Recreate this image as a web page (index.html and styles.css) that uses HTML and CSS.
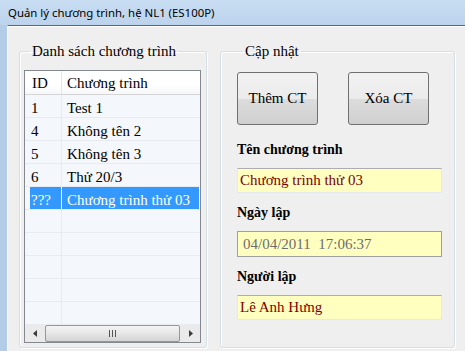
FILE: index.html
```html
<!DOCTYPE html>
<html>

<head>
    <meta charset="UTF-8">
    <title>Quản lý chương trình</title>
    <link rel="stylesheet" href="styles.css">
</head>

<body>

    <div class="window">
        <div class="titlebar">Quản lý chương trình, hệ NL1 (ES100P)</div>
        <div class="frame">
            <div class="client">

                <!-- Danh sách bên trái -->
                <fieldset class="group group-list">
                    <legend>Danh sách chương trình</legend>
                    <div class="listview">
                        <div class="lv-head">
                            <div class="col-id">ID</div>
                            <div class="col-name">Chương trình</div>
                        </div>
                        <div class="lv-body">
                            <div class="lv-row">
                                <div class="cell-id"><span>1</span></div>
                                <div class="cell-name"><span>Test 1</span></div>
                            </div>
                            <div class="lv-row">
                                <div class="cell-id"><span>4</span></div>
                                <div class="cell-name"><span>Không tên 2</span></div>
                            </div>
                            <div class="lv-row">
                                <div class="cell-id"><span>5</span></div>
                                <div class="cell-name"><span>Không tên 3</span></div>
                            </div>
                            <div class="lv-row">
                                <div class="cell-id"><span>6</span></div>
                                <div class="cell-name"><span>Thử 20/3</span></div>
                            </div>
                            <div class="lv-row selected">
                                <div class="cell-id"><span>???</span></div>
                                <div class="cell-name"><span>Chương trình thử 03</span></div>
                            </div>
                            <div class="lv-row"><div class="cell-id"></div><div class="cell-name"></div></div>
                            <div class="lv-row"><div class="cell-id"></div><div class="cell-name"></div></div>
                            <div class="lv-row"><div class="cell-id"></div><div class="cell-name"></div></div>
                            <div class="lv-row"><div class="cell-id"></div><div class="cell-name"></div></div>
                            <div class="lv-row"><div class="cell-id"></div><div class="cell-name"></div></div>
                        </div>
                        <div class="hscroll">
                            <div class="sb-arrow">
                                <svg width="4" height="7" viewBox="0 0 4 7"><path d="M4 0 L0 3.5 L4 7 Z" fill="#3c3c3c"/></svg>
                            </div>
                            <div class="sb-thumb">
                                <svg width="7" height="7" viewBox="0 0 7 7">
                                    <path d="M0.5 0 V7 M3.5 0 V7 M6.5 0 V7" stroke="#555" stroke-width="1"/>
                                </svg>
                            </div>
                            <div class="sb-arrow">
                                <svg width="4" height="7" viewBox="0 0 4 7"><path d="M0 0 L4 3.5 L0 7 Z" fill="#3c3c3c"/></svg>
                            </div>
                        </div>
                    </div>
                </fieldset>

                <!-- Cập nhật bên phải -->
                <fieldset class="group group-edit">
                    <legend>Cập nhật</legend>
                    <div class="buttons">
                        <button class="btn">Thêm CT</button>
                        <button class="btn">Xóa CT</button>
                    </div>
                    <div class="field">
                        <div class="field-label">Tên chương trình</div>
                        <input class="textbox" type="text" value="Chương trình thử 03">
                    </div>
                    <div class="field">
                        <div class="field-label">Ngày lập</div>
                        <input class="textbox disabled" type="text" value="04/04/2011  17:06:37" readonly>
                    </div>
                    <div class="field">
                        <div class="field-label">Người lập</div>
                        <input class="textbox" type="text" value="Lê Anh Hưng">
                    </div>
                </fieldset>

            </div>
        </div>
    </div>

</body>

</html>
```

FILE: styles.css
```css
/* Cửa sổ kiểu Windows 7 Basic */
body {
    margin: 0;
    padding: 0;
    font-family: "Liberation Serif", "Times New Roman", serif;
    font-size: 15px;
    color: #000;
}

.window {
    width: 465px;
    height: 351px;
    display: flex;
    flex-direction: column;
    background-color: #bcd3ec;
    overflow: hidden;
}

.titlebar {
    height: 25px;
    line-height: 25px;
    padding-left: 8px;
    font-family: "Noto Sans", "Open Sans", sans-serif;
    font-size: 11.4px;
    background: linear-gradient(#c8ddf2, #bcd3ec);
}

.frame {
    flex: 1;
    display: flex;
    border-left: 7px solid #b3cce8;
}

.client {
    flex: 1;
    display: flex;
    gap: 13px;
    padding: 16px 9px 5px 11px;
    background-color: #efefef;
    border-top: 1px solid #56687f;
    border-left: 1px solid #f8f8f8;
    box-shadow: inset 0 1px 0 #ffffff;
}

/* Group box */
.group {
    margin: 0;
    padding: 0;
    min-width: 0;
    border: 1px solid #d5dfe5;
    border-radius: 3px;
    box-shadow: inset 1px 1px 0 #ffffff, 1px 1px 0 #ffffff;
    display: flex;
    flex-direction: column;
}

.group legend {
    margin-left: 6px;
    padding: 0 2px;
    line-height: 18px;
    font-size: 15px;
}

.group-list {
    width: 188px;
    box-sizing: border-box;
    padding: 10px 5px 4px 4px;
}

.group-edit {
    width: 235px;
    box-sizing: border-box;
    padding: 12px 12px 0 16px;
}

/* ListView */
.listview {
    flex: 1;
    display: flex;
    flex-direction: column;
    border: 1px solid #828790;
    background-color: #f4f7fb;
    overflow: hidden;
}

.lv-head {
    display: flex;
    height: 23px;
    border-bottom: 1px solid #d5d5d5;
    background: linear-gradient(#ffffff, #ffffff 60%, #f5f7f9);
    line-height: 18px;
}

.lv-head .col-id {
    width: 37px;
    box-sizing: border-box;
    padding: 3px 0 0 7px;
    border-right: 1px solid #e3e8ee;
}

.lv-head .col-name {
    flex: 1;
    padding: 3px 0 0 5px;
}

.lv-body {
    flex: 1;
    overflow: hidden;
}

.lv-row {
    display: flex;
    height: 22px;
    border-bottom: 1px solid #e8ecf1;
}

.cell-id {
    width: 37px;
    box-sizing: border-box;
    padding-left: 5px;
    border-right: 1px solid #e8ecf1;
    display: flex;
}

.cell-name {
    flex: 1;
    padding-right: 1px;
    display: flex;
}

.lv-row span {
    flex: 1;
    line-height: 18px;
    padding-top: 4px;
    white-space: nowrap;
}

.cell-id span {
    padding-left: 1px;
}

.cell-name span {
    padding-left: 5px;
}

.lv-row.selected span {
    background-color: #3399ff;
    color: #ffffff;
}

.lv-row.selected .cell-id {
    border-right-color: #ffffff;
}

/* Thanh cuộn ngang */
.hscroll {
    height: 17px;
    display: flex;
    background-color: #eaeaea;
}

.sb-arrow {
    width: 19px;
    display: flex;
    justify-content: center;
    align-items: center;
}

.sb-thumb {
    flex: 1;
    margin: 0 1px;
    border: 1px solid #979797;
    border-radius: 2px;
    background: linear-gradient(#f4f4f4, #e6e6e6 50%, #d4d4d4);
    display: flex;
    justify-content: center;
    align-items: center;
}

/* Nút bấm */
.buttons {
    display: flex;
    gap: 30px;
    margin-bottom: 16px;
}

.btn {
    width: 81px;
    height: 53px;
    padding: 0;
    border: 1px solid #707070;
    border-radius: 3px;
    background: linear-gradient(#f2f2f2, #ebebeb 50%, #dddddd 50%, #cfcfcf);
    font-family: "Liberation Serif", "Times New Roman", serif;
    font-size: 15px;
    color: #000;
}

/* Các ô nhập liệu */
.field + .field {
    margin-top: 11px;
}

.field-label {
    font-size: 14px;
    font-weight: bold;
    line-height: 18px;
    margin-bottom: 9px;
}

.textbox {
    display: block;
    width: 205px;
    height: 25px;
    box-sizing: border-box;
    margin: 0;
    padding: 0 2px;
    border: 1px solid #e3e9ef;
    border-top-color: #abadb3;
    background-color: #ffffc0;
    font-family: "Liberation Serif", "Times New Roman", serif;
    font-size: 15px;
    color: #800000;
    outline: none;
}

.textbox.disabled {
    height: 26px;
    padding-left: 5px;
    border-color: #a0a0a0;
    color: #6d6d6d;
}
```
